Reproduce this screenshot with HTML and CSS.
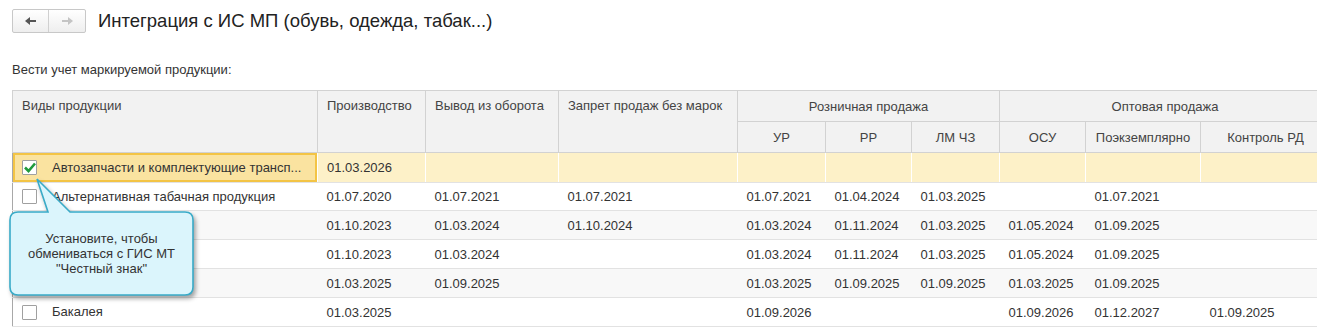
FILE: index.html
```html
<!DOCTYPE html>
<html lang="ru">
<head>
    <meta charset="UTF-8">
    <meta name="viewport" content="width=device-width, initial-scale=1.0">
    <title>Интеграция с ИС МП</title>
    <link rel="stylesheet" href="styles.css">
</head>
<body>

<div class="page">
    <div class="topbar">
        <div class="nav">
            <button class="nav-btn back">
                <svg width="12" height="10" viewBox="0 0 12 10"><path d="M0 5 L5 1 L5 4 L11 4 L11 6 L5 6 L5 9 Z" fill="#555"/></svg>
            </button>
            <button class="nav-btn fwd">
                <svg width="12" height="10" viewBox="0 0 12 10"><path d="M12 5 L7 1 L7 4 L1 4 L1 6 L7 6 L7 9 Z" fill="#c4c4c4"/></svg>
            </button>
        </div>
        <h1 class="title">Интеграция с ИС МП (обувь, одежда, табак...)</h1>
    </div>

    <p class="label">Вести учет маркируемой продукции:</p>

    <!-- Таблица видов продукции -->
    <table class="grid">
        <colgroup>
            <col style="width:305px">
            <col style="width:108px">
            <col style="width:133px">
            <col style="width:179px">
            <col style="width:88px">
            <col style="width:86px">
            <col style="width:88px">
            <col style="width:86px">
            <col style="width:115px">
            <col style="width:130px">
        </colgroup>
        <thead>
            <tr>
                <th rowspan="2" class="top name-head">Виды продукции</th>
                <th rowspan="2" class="top">Производство</th>
                <th rowspan="2" class="top">Вывод из оборота</th>
                <th rowspan="2" class="top">Запрет продаж без марок</th>
                <th colspan="3" class="group">Розничная продажа</th>
                <th colspan="3" class="group">Оптовая продажа</th>
            </tr>
            <tr>
                <th class="sub">УР</th>
                <th class="sub">РР</th>
                <th class="sub">ЛМ ЧЗ</th>
                <th class="sub">ОСУ</th>
                <th class="sub">Поэкземплярно</th>
                <th class="sub">Контроль РД</th>
            </tr>
        </thead>
        <tbody>
            <tr class="current">
                <td class="name selected"><span class="check on"><svg width="12" height="11" viewBox="0 0 12 11"><path d="M1 5.5 L4.5 9 L11 1.5" fill="none" stroke="#1f9a3c" stroke-width="2.6"/></svg></span>Автозапчасти и комплектующие трансп...</td>
                <td>01.03.2026</td><td></td><td></td><td></td><td></td><td></td><td></td><td></td><td></td>
            </tr>
            <tr class="first">
                <td class="name"><span class="check"></span>Альтернативная табачная продукция</td>
                <td>01.07.2020</td><td>01.07.2021</td><td>01.07.2021</td><td>01.07.2021</td><td>01.04.2024</td><td>01.03.2025</td><td></td><td>01.07.2021</td><td></td>
            </tr>
            <tr class="alt">
                <td class="name"><span class="check"></span></td>
                <td>01.10.2023</td><td>01.03.2024</td><td>01.10.2024</td><td>01.03.2024</td><td>01.11.2024</td><td>01.03.2025</td><td>01.05.2024</td><td>01.09.2025</td><td></td>
            </tr>
            <tr>
                <td class="name"><span class="check"></span></td>
                <td>01.10.2023</td><td>01.03.2024</td><td></td><td>01.03.2024</td><td>01.11.2024</td><td>01.03.2025</td><td>01.05.2024</td><td>01.09.2025</td><td></td>
            </tr>
            <tr class="alt">
                <td class="name"><span class="check"></span></td>
                <td>01.03.2025</td><td>01.09.2025</td><td></td><td>01.03.2025</td><td>01.09.2025</td><td>01.09.2025</td><td>01.03.2025</td><td>01.09.2025</td><td></td>
            </tr>
            <tr>
                <td class="name"><span class="check"></span>Бакалея</td>
                <td>01.03.2025</td><td></td><td></td><td>01.09.2026</td><td></td><td></td><td>01.09.2026</td><td>01.12.2027</td><td>01.09.2025</td>
            </tr>
        </tbody>
    </table>

    <!-- Подсказка к флажку -->
    <div class="hint">
        <svg class="hint-shape" width="200" height="135" viewBox="0 0 200 135">
            <path d="M12 40 L42 40 L31 7 L64 40 L179 40 Q187 40 187 48 L187 115 Q187 123 179 123 L12 123 Q4 123 4 115 L4 48 Q4 40 12 40 Z" fill="#dbf5fc" stroke="#39abc8" stroke-width="1.6"/>
        </svg>
        <div class="hint-text">Установите, чтобы<br>обмениваться с ГИС МТ<br>"Честный знак"</div>
    </div>
</div>

</body>
</html>
```

FILE: styles.css
```css
body {
    margin: 0;
    padding: 0;
    background-color: #fff;
    font-family: "Liberation Sans", Arial, sans-serif;
    color: #333;
    overflow: hidden;
}
.page {
    position: relative;
    padding: 9px 0 0 12px;
}
.topbar {
    display: flex;
    align-items: center;
    gap: 12px;
    height: 24px;
}
.nav {
    display: flex;
    height: 24px;
    border: 1px solid #c8c8c8;
    border-radius: 2px;
    box-sizing: border-box;
    background: linear-gradient(#fff, #eee);
}
.nav-btn {
    width: 36px;
    height: 22px;
    border: none;
    background: none;
    padding: 0;
    display: flex;
    align-items: center;
    justify-content: center;
}
.nav-btn.back {
    border-right: 1px solid #d0d0d0;
}
.title {
    margin: 0;
    font-size: 18.5px;
    font-weight: normal;
    color: #222;
}
.label {
    margin: 29px 0 0 0;
    font-size: 13px;
    line-height: 16px;
    color: #333;
}
.grid {
    margin-top: 12px;
    width: 1318px;
    table-layout: fixed;
    border-collapse: collapse;
    font-size: 13px;
    border-top: 1px solid #a8a8a8;
    border-left: 1px solid #a8a8a8;
}
.grid th {
    background-color: #f2f2f2;
    font-weight: normal;
    color: #444;
    border: 1px solid #d2d2d2;
    white-space: nowrap;
    height: 30px;
    padding: 0 9px;
}
.grid th.top {
    text-align: left;
    vertical-align: top;
    padding-top: 7px;
}
.grid th.name-head {
    padding-left: 9px;
}
.grid th.group,
.grid th.sub {
    text-align: center;
    vertical-align: middle;
}
.grid td {
    height: 28px;
    padding: 0 9px;
    border-bottom: 1px solid #e2e2e2;
    white-space: nowrap;
    overflow: hidden;
    color: #333;
}
.grid tr.first td {
    height: 27px;
}
.grid tr.alt td {
    background-color: #f8f8f8;
}
.grid tr.current td {
    height: 29px;
    background-color: #fdf1c8;
    border-right: 1px solid #fff;
}
.grid tr.current td.selected {
    background-color: #fae3a0;
    box-shadow: inset 0 0 0 2px #f3c445;
    border-right: 1px solid #fff;
}
.grid td.name {
    padding-left: 9px;
}
.check {
    display: inline-block;
    vertical-align: middle;
    width: 13px;
    height: 13px;
    border: 1px solid #a0a0a0;
    border-radius: 1px;
    background-color: #fff;
    margin-right: 15px;
    margin-top: -2px;
    position: relative;
}
.check svg {
    position: absolute;
    left: 1px;
    top: 1px;
}
.hint {
    position: absolute;
    left: 6px;
    top: 172px;
    width: 200px;
    height: 135px;
}
.hint-shape {
    filter: drop-shadow(2px 3px 2px rgba(0, 0, 0, 0.35));
}
.hint-text {
    position: absolute;
    left: 4px;
    top: 40px;
    width: 183px;
    height: 83px;
    display: flex;
    align-items: center;
    justify-content: center;
    text-align: center;
    font-size: 13px;
    line-height: 15px;
    color: #333;
}
```
